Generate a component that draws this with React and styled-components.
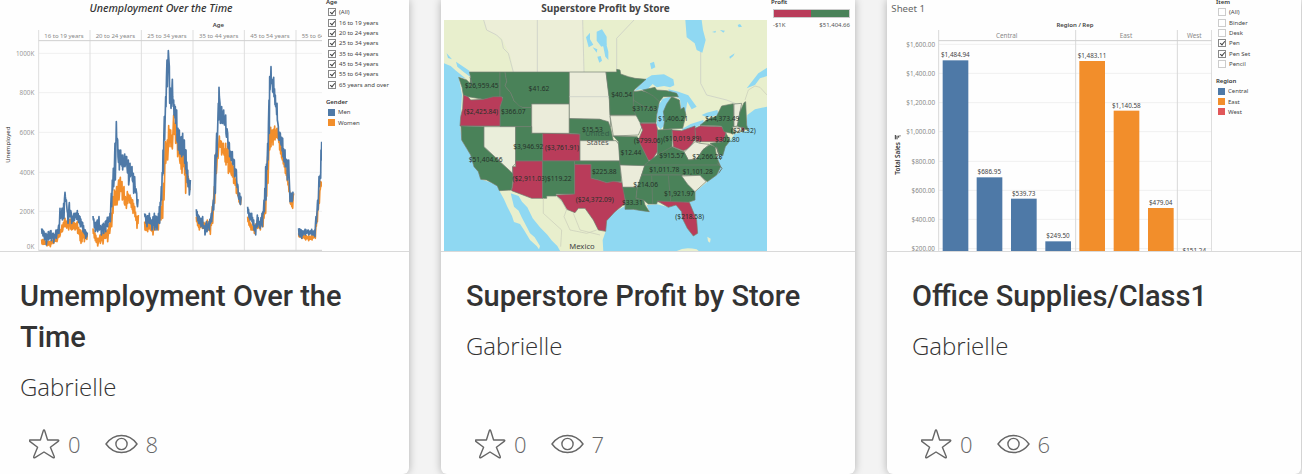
import React from "react";
import styled, { createGlobalStyle } from "styled-components";

const BLUE = "#4e79a7";
const ORANGE = "#f28e2b";
const RED = "#e15759";
const PROFIT = "#4a8259";
const LOSS = "#b93c5a";

const GlobalStyle = createGlobalStyle`
  * { box-sizing: border-box; }
  body {
    margin: 0;
    background: #f3f3f3;
    color: #333;
    font-family: "Open Sans", "Noto Sans", sans-serif;
    overflow-x: hidden;
  }
`;

const Gallery = styled.main`
  display: grid;
  grid-template-columns: repeat(3, minmax(0, 1fr));
  gap: 32px;
  margin: 0 1px 0 -5px;
`;

const Card = styled.article`
  display: flex;
  flex-direction: column;
  min-height: 474px;
  background: #fefefe;
  border-radius: 0 0 6px 6px;
  box-shadow: 0 0 8px rgba(0, 0, 0, 0.28);
`;

const Thumb = styled.div`
  display: flex;
  height: 252px;
  overflow: hidden;
  border-bottom: 1px solid #d9d9d9;
  font-family: "Noto Sans", sans-serif;
`;

const Drawing = styled.svg`
  flex: none;
  display: block;
  font-family: "Noto Sans", sans-serif;
`;

const MapColumn = styled.div`
  display: flex;
  flex-direction: column;
  flex: none;
  padding-left: 3px;
`;

const MapTitle = styled.h3`
  margin: 0;
  height: 20px;
  font-size: 10px;
  line-height: 16px;
  font-weight: 700;
  color: #444;
  text-align: center;
`;

const Side = styled.aside`
  flex: 1;
  min-width: 0;
  display: flex;
  flex-direction: column;
  gap: 7px;
  margin-top: -3px;
  padding-left: 4px;
  font-size: 7px;
  line-height: 10px;
  white-space: nowrap;
`;

const Group = styled.div`
  display: grid;
  grid-auto-rows: 1fr;
  min-height: ${(p) => Math.round((p.$rows * 31) / 3)}px;
`;

const GroupTitle = styled.div`
  font-size: 6px;
  font-weight: 600;
`;

const Option = styled.label`
  display: flex;
  align-items: center;
  gap: 3px;
  padding-left: 2px;
  color: #444;
  font-size: 6px;
`;

const Tick = styled.input`
  appearance: none;
  width: 8px;
  height: 8px;
  margin: 0;
  border: 1px solid #ccc;
  background: #fff;
  &:checked { border-color: #888; }
  &:checked::after {
    content: "";
    display: block;
    width: 2px;
    height: 4px;
    margin: 0 0 0 2px;
    border: solid #444;
    border-width: 0 1px 1px 0;
    transform: rotate(40deg);
  }
`;

const Swatch = styled.span`
  width: 7px;
  height: 7px;
  background: ${(p) => p.$color};
`;

const Ramp = styled.div`
  width: 77px;
  height: 9px;
  margin: 2px 0 2px 2px;
  border: 1px solid #ccc;
  background: linear-gradient(90deg, ${LOSS} 50%, ${PROFIT} 50%);
`;

const RampLabels = styled.div`
  display: flex;
  justify-content: space-between;
  width: 77px;
  margin-left: 2px;
  font-size: 6px;
  color: #555;
`;

const RampBox = styled.div`
  font-size: 6px;
`;

const Info = styled.div`
  flex: 1;
  display: flex;
  flex-direction: column;
  padding: 24px 25px 14px;
`;

const Title = styled.h2`
  margin: 0 0 14px;
  font-family: Roboto, "Open Sans", sans-serif;
  font-size: 29px;
  line-height: 41px;
  font-weight: 500;
`;

const TextLink = styled.a`
  color: inherit;
  text-decoration: none;
`;

const Author = styled(TextLink)`
  align-self: flex-start;
  font-size: 24px;
  line-height: 30px;
  font-weight: 300;
`;

const Stats = styled.div`
  display: flex;
  align-items: center;
  margin-top: auto;
  padding-left: 9px;
  gap: 24px;
  color: #666;
  font-size: 22px;
  line-height: 32px;
  font-weight: 300;
`;

const Stat = styled.span`
  display: flex;
  align-items: center;
  gap: 8px;
`;

const StarButton = styled.button`
  display: flex;
  padding: 0;
  border: 0;
  background: none;
  color: inherit;
`;

/* The thumbnails are drawn at three units to the pixel. */

const panels = [
  {
    label: "16 to 19 years", x: 192,
    men: [[125,685,700],[132,695,715],[138,700,735],[145,695,720],[153,692,722],[160,700,728],[168,690,715],[176,675,700],[180,625,655],[186,625,660],[191,610,655],[195,577,590],[199,600,615],[203,640,670],[208,608,650],[214,640,670],[222,640,662],[232,632,660],[240,650,680],[248,668,695],[256,690,715],[262,697,710]],
    women: [[125,718,732],[140,722,738],[150,725,740],[160,715,730],[170,705,725],[178,690,710],[186,675,695],[195,655,680],[205,655,690],[214,650,690],[224,670,690],[232,665,700],[242,690,730],[252,690,725],[262,700,720]],
  },
  {
    label: "20 to 24 years", x: 346,
    men: [[279,648,660],[285,670,695],[292,660,695],[297,650,690],[303,680,705],[310,670,700],[316,665,695],[322,652,680],[330,640,665],[334,580,620],[337,540,570],[340,505,560],[345,430,540],[349,365,420],[353,420,470],[357,450,510],[362,450,490],[367,465,510],[374,462,500],[380,470,500],[385,480,555],[390,490,530],[396,500,540],[400,520,580],[404,530,560],[410,580,610],[415,600,635]],
    women: [[279,685,700],[285,700,722],[292,715,738],[300,705,730],[308,700,732],[316,690,715],[322,690,725],[328,670,700],[334,640,680],[338,590,640],[343,570,615],[350,560,615],[356,540,600],[361,532,570],[366,545,600],[372,560,610],[378,595,625],[382,575,610],[390,585,610],[398,600,640],[404,620,650],[410,650,685],[415,645,675]],
  },
  {
    label: "25 to 34 years", x: 501,
    men: [[434,640,650],[440,650,680],[448,640,670],[455,660,690],[463,640,690],[470,650,690],[478,620,670],[484,560,600],[489,450,520],[493,350,420],[497,290,320],[501,180,260],[505,152,170],[508,200,310],[512,265,325],[517,238,290],[521,300,345],[526,320,370],[530,330,420],[534,385,450],[538,390,460],[544,410,470],[548,400,465],[553,420,490],[558,450,520],[563,510,560],[567,545,585],[571,540,570]],
    women: [[434,665,690],[442,665,695],[450,665,690],[458,680,705],[466,670,690],[474,660,690],[482,620,660],[487,600,655],[491,550,600],[496,425,490],[502,420,480],[506,377,440],[512,390,440],[516,410,447],[521,345,380],[526,370,430],[532,410,470],[538,440,480],[545,470,520],[550,460,500],[556,480,580],[562,510,550],[571,570,580]],
  },
  {
    label: "35 to 44 years", x: 656,
    men: [[589,628,648],[595,645,670],[602,655,680],[608,650,685],[614,680,705],[620,665,695],[627,665,690],[634,640,665],[640,600,630],[645,465,580],[650,400,470],[655,310,360],[657,262,290],[660,310,370],[665,320,370],[671,330,370],[677,345,400],[683,400,440],[688,430,470],[697,455,490],[703,480,530],[709,510,540],[714,560,590],[719,580,610],[724,590,630]],
    women: [[589,650,665],[597,665,690],[606,660,685],[614,670,695],[622,660,690],[630,670,703],[637,620,670],[643,560,610],[648,460,520],[653,450,475],[658,408,430],[664,425,465],[670,430,460],[677,430,495],[684,440,520],[692,470,520],[700,500,550],[708,540,580],[716,580,605],[724,595,620]],
  },
  {
    label: "45 to 54 years", x: 810,
    men: [[743,620,640],[749,640,660],[755,640,665],[761,660,690],[766,680,705],[772,645,680],[779,665,685],[786,640,680],[792,600,635],[797,500,600],[803,430,480],[807,300,400],[809,230,270],[813,200,250],[817,240,275],[821,232,290],[826,285,320],[831,310,360],[835,380,420],[841,400,430],[848,415,470],[855,450,500],[861,480,540],[866,480,520],[869,570,605],[875,580,605],[879,575,600]],
    women: [[743,650,665],[752,670,690],[762,680,700],[772,660,685],[780,665,690],[788,645,680],[796,610,640],[803,470,550],[808,400,450],[812,382,440],[818,390,435],[824,378,420],[831,385,410],[838,410,450],[846,450,480],[855,490,520],[863,520,555],[870,580,610],[877,600,625],[881,580,595]],
  },
  {
    label: "55 to 64 years", x: 964,
    men: [[896,685,705],[904,690,715],[915,688,705],[925,690,705],[935,688,705],[944,690,710],[948,650,670],[953,600,630],[957,530,560],[961,525,535],[963,450,480],[965,425,430]],
    women: [[896,700,710],[906,700,715],[916,705,720],[925,708,722],[935,705,720],[945,690,715],[951,640,665],[957,590,610],[962,545,560],[965,545,560]],
  },
];

/* Turns [x, high, low] bands into a jagged monthly line that touches both
   ends of every band. */
function jagged(bands) {
  const points = [];
  let n = 0;
  const add = (x, y) => points.push(`${x.toFixed(1)},${y.toFixed(1)}`);
  for (let i = 0; i < bands.length - 1; i++) {
    const [x0, h0, l0] = bands[i];
    const [x1, h1, l1] = bands[i + 1];
    add(x0, h0);
    add(x0 + 1, l0);
    for (let x = x0 + 2.5; x < x1 - 0.5; x += 1.5) {
      const t = (x - x0) / (x1 - x0);
      const high = h0 + (h1 - h0) * t;
      const low = l0 + (l1 - l0) * t;
      const r = Math.abs(Math.sin(n * 12.9898) * 43758.5453) % 1;
      add(x, high + (low - high) * (n % 2 ? 0.6 + r * 0.4 : r * 0.35));
      n++;
    }
  }
  const last = bands[bands.length - 1];
  add(last[0], last[1]);
  return points.join(" ");
}

function UnemploymentChart() {
  return (
    <Drawing width="327" height="251" viewBox="-15 0 981 753" role="img" aria-label="Unemployment by age">
      <text x="483" y="35" fontSize="32" fontStyle="italic" fontWeight="500" fill="#333" textAnchor="middle">Unemployment Over the Time</text>
      <text x="655" y="82" fontSize="18" fontWeight="600" fill="#444" textAnchor="middle">Age</text>
      <text transform="translate(30 434) rotate(-90)" fontSize="18" fill="#333" textAnchor="middle">Unemployed</text>
      {[["1000K", 160], ["800K", 278], ["600K", 397], ["400K", 517], ["200K", 634], ["0K", 739]].map(([t, y]) => (
        <g key={t}>
          {t !== "0K" && <path d={`M116 ${y}H966`} stroke="#f0f0f0" strokeWidth="3" />}
          <text x="103" y={y + 7} fontSize="19" fill="#999" textAnchor="end">{t}</text>
        </g>
      ))}
      {[116, 270, 424, 579, 733, 888].map((x) => <path key={x} d={`M${x} 90V752`} stroke="#dedede" strokeWidth="3" />)}
      <path d="M116 122H966M116 751H966" stroke="#cfcfcf" strokeWidth="3" />
      {panels.map((p) => (
        <g key={p.label} fill="none" strokeWidth="5" strokeLinejoin="round">
          <polyline points={jagged(p.women)} stroke={ORANGE} />
          <polyline points={jagged(p.men)} stroke={BLUE} />
          <text x={p.x} y="113" fontSize="18" fill="#888" stroke="none" textAnchor="middle">{p.label}</text>
        </g>
      ))}
    </Drawing>
  );
}

const westStates = [
  [PROFIT, "88,216 180,216 180,290 130,298 84,290 70,285 66,262 56,232 80,240 90,250 92,232"],
  [PROFIT, "180,216 195,216 200,245 195,258 212,278 222,302 248,322 275,322 275,380 180,380 180,320 188,292 180,290"],
  [PROFIT, "195,216 388,216 388,312 275,312 275,322 248,322 238,318 222,302 212,278 195,258 200,245"],
  [LOSS, "70,285 84,290 92,300 130,298 160,290 185,290 188,298 180,320 180,378 60,378 62,350 68,325"],
  [PROFIT, "63,378 132,380 132,440 220,522 218,545 215,570 178,572 172,558 155,548 140,540 122,538 115,515 102,500 92,465 80,445 65,420"],
  ["#eaeeda", "132,380 227,380 227,490 218,500 218,520 132,440"],
  ["#ebecda", "275,312 388,312 388,400 275,400"],
  ["#ebecda", "388,216 498,216 508,290 512,380 480,358 388,356"],
  [PROFIT, "227,380 275,380 275,400 308,400 308,483 227,483"],
  [LOSS, "308,400 420,402 420,483 308,483"],
  [LOSS, "227,483 308,483 308,595 275,595 215,572 220,545 218,500 227,500"],
  [PROFIT, "308,483 404,483 404,582 348,582 348,588 320,588 320,595 308,595"],
  [PROFIT, "388,356 480,358 505,365 512,385 520,422 420,422 420,402 388,400"],
  ["#ebecda", "420,422 528,422 538,435 540,483 420,483"],
  [PROFIT, "404,483 540,483 544,545 520,545 500,548 475,540 453,535 453,493 404,493"],
  [LOSS, "404,493 453,493 453,535 475,540 500,548 520,544 548,548 553,570 556,610 525,635 500,662 497,694 475,690 460,660 435,625 415,625 405,638 380,628 365,600 348,585 404,582"],
];

const eastStates = [
  [PROFIT, "18,216 50,216 50,208 60,210 62,222 85,230 105,235 138,238 102,270 100,300 115,345 30,345 28,300"],
  ["#ebecda", "30,347 115,347 128,375 115,405 40,408"],
  [PROFIT, "40,408 112,410 130,450 145,480 150,490 130,500 60,495 55,425"],
  ["#ebecda", "60,495 135,497 125,525 112,562 68,562"],
  [PROFIT, "68,562 112,562 108,595 130,598 135,615 148,635 125,632 100,628 75,628 76,600"],
  [PROFIT, "100,275 125,272 165,284 178,305 170,345 168,368 120,368 100,330"],
  [LOSS, "120,370 168,370 173,390 172,455 155,482 145,480 130,450 115,420 128,390"],
  [PROFIT, "128,270 165,262 170,270 200,272 230,280 235,290 190,290 178,305 160,288"],
  [PROFIT, "190,388 194,360 190,335 200,312 215,290 238,300 242,328 252,322 258,345 248,385"],
  [PROFIT, "173,390 216,388 216,440 190,462 172,465"],
  [LOSS, "216,390 245,392 285,378 287,415 268,445 250,452 220,440"],
  [LOSS, "285,385 300,378 365,380 378,398 370,425 288,425"],
  [PROFIT, "300,376 320,360 350,348 365,318 400,311 402,380 404,402 372,395 365,378"],
  ["#ebecda", "402,312 425,310 420,335 412,378 402,380"],
  [PROFIT, "412,378 420,335 432,308 437,305 440,375 444,390 425,385"],
  ["#ebecda", "398,380 425,382 428,392 400,396"],
  [LOSS, "424,381 434,384 432,394 426,392"],
  ["#ebecda", "252,457 285,425 300,430 328,433 308,450 290,478 265,480"],
  [PROFIT, "135,493 172,465 216,440 252,455 265,480 290,478 310,448 330,434 345,440 350,470 362,500 350,525 322,545 300,528 245,525 125,525"],
  [PROFIT, "125,525 245,525 285,575 285,600 265,607 172,605 170,612 145,612 130,600 108,595 112,562"],
  ["#ebecda", "245,528 300,526 318,545 285,575 262,552"],
  [LOSS, "172,603 268,607 290,660 293,700 280,708 262,685 247,655 245,635 228,615 205,622"],
  [PROFIT, "330,430 370,425 378,400 390,422 376,440 368,468 355,460 350,445"],
];

const mapLabels = [
  ["$26,959.45", 125, 256], ["$41.62", 297, 266], ["($2,425.84)", 123, 336], ["$366.07", 220, 334],
  ["$51,404.66", 137, 479], ["$3,946.92", 265, 439], ["($3,761.91)", 366, 443], ["($2,911.03)", 269, 535],
  ["$119.22", 358, 535], ["$15.53", 457, 390], ["$225.88", 493, 515], ["($24,372.09)", 464, 598],
  ["$40.54", 545, 285], ["$317.63", 614, 325], ["$1,406.21", 699, 356], ["($799.06)", 625, 423],
  ["($10,019.89)", 727, 416], ["$44,373.49", 847, 357], ["$302.80", 862, 420], ["($24.32)", 910, 391],
  ["$12.44", 573, 459], ["$915.57", 695, 467], ["$2,266.28", 802, 469], ["$1,011.78", 673, 510],
  ["$1,101.28", 773, 515], ["$214.06", 617, 553], ["$1,921.97", 717, 580], ["$33.31", 577, 607], ["($218.58)", 749, 650],
];

const WATER = "#8fd8f2";

function ProfitMap() {
  return (
    <Drawing width="323" height="231" viewBox="12 60 969 693" role="img" aria-label="Profit by state">
      <path d="M12 57H981V756H12Z" fill="#e8efcd" />
      <path d="M131 60H292V216H220L212 170L185 115L140 90ZM292 60H428L432 216H292Z" fill="#ecedda" opacity=".8" />
      <g fill="none" stroke="#c6c8c4" strokeWidth="2">
        <path d="M131 60L140 90L170 105L185 120L190 145L205 160L220 216M292 60V216M428 60L432 216M582 60L530 115V208M782 150V250L800 285L860 300L890 312" />
      </g>
      <g fill={WATER}>
        <path d="M12 190L32 198L48 212L78 236L56 230L66 285L60 375L65 420L92 465L102 500L115 515L122 538L155 548L172 558L178 572L192 598L202 620L216 648L222 666L240 672L252 690L270 720L290 738L297 748L300 738L284 712L270 700L262 684L245 652L236 632L222 620L212 580L236 588L246 605L262 622L278 655L300 682L322 704L336 722L352 738L362 756H12Z" />
        <path d="M497 694L500 662L525 635L556 617L575 628L600 630L628 635L620 615L652 613L685 622L708 615L727 636L728 655L742 685L760 708L773 700L770 660L748 607L765 600L766 575L802 545L830 525L842 500L832 470L845 455L856 440L870 422L884 402L922 392L920 375L922 345L945 328L981 320V756H490L488 720Z" />
        <path d="M48 185L88 212L90 230L70 215L52 200ZM20 160L36 178L24 174ZM470 95L486 88L500 110L500 134L484 140L470 122ZM438 112L450 98L450 118L460 134L446 142ZM458 142L472 148L470 158ZM472 170L482 168L486 182L478 188Z" />
        <path d="M736 60H785L789 90L797 120L787 158L770 150L764 130L740 112ZM630 190L642 185L646 202L634 208ZM868 170L884 160L880 168L870 176ZM981 203L955 220L920 265L945 255L960 235L981 228ZM816 96L828 92L826 98ZM840 90L855 92L850 98ZM893 75L900 72L906 80L896 82ZM480 90L492 105L505 155V180L496 170L490 140L480 118Z" />
        <path d="M583 273L612 240L635 226L672 223L700 238L703 256L690 262L672 258L650 262L638 252L618 272L600 268Z" />
        <path d="M650 375L652 322L668 296L692 290L680 325L674 375L662 388Z" />
        <path d="M685 268L715 275L745 286L770 320L755 328L742 305L735 345L724 330L720 298L705 288L690 286Z" />
        <path d="M725 388L752 372L790 360L792 370L760 385L735 394ZM785 345L800 338L832 330L836 345L800 352Z" />
      </g>
      <g fill="#e8efcd">
        <path d="M706 756Q730 738 770 748L780 756ZM802 710L812 716L810 728L804 724Z" />
      </g>
      <g stroke="#6f7c70" strokeWidth="2" strokeLinejoin="round">
        {westStates.map(([fill, points]) => <polygon key={points} fill={fill} points={points} />)}
        <g transform="translate(480 0)">
          {eastStates.map(([fill, points]) => <polygon key={points} fill={fill} points={points} />)}
          <path d="M155 527L158 612M205 527L212 605M135 495H360M100 300L128 318L170 330" fill="none" />
        </g>
        <path d="M388 290H507" stroke="#c6c8c4" />
      </g>
      <path d="M348 588L365 605L380 628L372 650L390 690L440 700L470 690M310 595V640L365 690L362 740M400 640L420 690L480 705M915 300L925 270L945 258L960 262L981 285" fill="none" stroke="#c9cbb9" strokeWidth="2" />
      <path d="M830 440L836 462L842 480M832 488L846 505L836 520M90 232L96 250L88 262" fill="none" stroke="#6f7c70" strokeWidth="3" />
      <g textAnchor="middle" fontSize="23">
        <text x="472" y="407" fill="#36604a">United</text>
        <text x="473" y="435" fill="#555">States</text>
        <text x="426" y="748" fill="#444">Mexico</text>
      </g>
      <g textAnchor="middle" fontSize="20" fill="#26322a">
        {mapLabels.map(([t, x, y]) => <text key={t} x={x} y={y + 7}>{t}</text>)}
      </g>
    </Drawing>
  );
}

const bars = [
  [173, 181, BLUE, "$1,484.94"], [275, 532, BLUE, "$686.95"], [378, 596, BLUE, "$539.73"], [481, 724, BLUE, "$249.50"],
  [583, 183, ORANGE, "$1,483.11"], [686, 332, ORANGE, "$1,140.58"], [789, 624, ORANGE, "$479.04"],
];
const ticks = [
  ["$1,600.00", 133], ["$1,400.00", 220], ["$1,200.00", 308], ["$1,000.00", 395],
  ["$800.00", 484], ["$600.00", 571], ["$400.00", 658], ["$200.00", 746],
];

function SuppliesChart() {
  return (
    <Drawing width="325" height="251" viewBox="6 0 975 753" role="img" aria-label="Total sales by region and rep">
      <text x="19" y="35" fontSize="29" fill="#666">Sheet 1</text>
      <text x="570" y="81" fontSize="18" fontWeight="600" fill="#444" textAnchor="middle">Region / Rep</text>
      <text transform="translate(45 524) rotate(-90)" fontSize="19" fontWeight="600" fill="#333">Total Sales</text>
      <path d="M31 418V405M36 418V407M41 413V407M45 409V406" stroke="#333" strokeWidth="3" />
      {ticks.map(([t, y]) => (
        <g key={t}>
          <path d={`M161 ${y}H980`} stroke="#f0f0f0" strokeWidth="3" />
          <text x="150" y={y + 7} fontSize="19" fill="#888" textAnchor="end">{t}</text>
        </g>
      ))}
      {[161, 572, 877, 980].map((x) => <path key={x} d={`M${x} 90V753`} stroke="#d8d8d8" strokeWidth="3" />)}
      <path d="M161 122H980" stroke="#cfcfcf" strokeWidth="3" />
      {[["Central", 365], ["East", 723], ["West", 928]].map(([t, x]) => (
        <text key={t} x={x} y="113" fontSize="19" fill="#888" textAnchor="middle">{t}</text>
      ))}
      {bars.map(([x, y, color, label]) => (
        <g key={label}>
          <rect x={x} y={y} width="77" height={753 - y} fill={color} />
          <text x={x + 38} y={y - 9} fontSize="19" fill="#444" textAnchor="middle">{label}</text>
        </g>
      ))}
      <text x="928" y="758" fontSize="19" fill="#444" textAnchor="middle">$151.24</text>
    </Drawing>
  );
}

function Filter({ title, options, checked }) {
  return (
    <Group $rows={options.length + 1} role="group" aria-label={title}>
      <GroupTitle>{title}</GroupTitle>
      {options.map((o) => (
        <Option key={o}>
          <Tick type="checkbox" defaultChecked={checked.includes(o)} />
          {o}
        </Option>
      ))}
    </Group>
  );
}

function Legend({ title, items }) {
  return (
    <Group $rows={items.length + 1}>
      <GroupTitle>{title}</GroupTitle>
      {items.map(([name, color]) => (
        <Option as="div" key={name}><Swatch $color={color} />{name}</Option>
      ))}
    </Group>
  );
}

function StarIcon() {
  return (
    <svg width="31" height="32" viewBox="1 0 31 32" fill="none" stroke="currentColor" strokeWidth="1.4" strokeLinejoin="round" aria-hidden="true">
      <path d="M16 2C16.4 2 16.6 2.4 16.8 3L19.6 12H29.8C31 12 31 12.8 30.2 13.4L22.4 19.2L26.2 28.6C26.6 29.8 26 30.2 25 29.6L16 24L7 29.6C6 30.2 5.4 29.8 5.8 28.6L9.6 19.2L1.8 13.4C1 12.8 1 12 2.2 12H12.4L15.2 3C15.4 2.4 15.6 2 16 2Z" />
    </svg>
  );
}

function EyeIcon() {
  return (
    <svg width="33" height="32" viewBox="0 0 33 32" fill="none" stroke="currentColor" strokeWidth="1.4" aria-hidden="true">
      <path d="M1 16C5 10.5 10 7.5 16.5 7.5S28 10.5 32 16C28 21.5 23 24.5 16.5 24.5S5 21.5 1 16Z" />
      <circle cx="16.5" cy="16" r="5.6" />
    </svg>
  );
}

function VizCard({ title, views, children }) {
  return (
    <Card>
      <Thumb>{children}</Thumb>
      <Info>
        <Title><TextLink href="#viz">{title}</TextLink></Title>
        <Author href="#author">Gabrielle</Author>
        <Stats>
          <Stat><StarButton type="button" aria-label="Favorite"><StarIcon /></StarButton>0</Stat>
          <Stat><EyeIcon />{views}</Stat>
        </Stats>
      </Info>
    </Card>
  );
}

const ages = ["(All)", "16 to 19 years", "20 to 24 years", "25 to 34 years", "35 to 44 years", "45 to 54 years", "55 to 64 years", "65 years and over"];

export default function App() {
  return (
    <>
      <GlobalStyle />
      <Gallery>
        <VizCard title="Umemployment Over the Time" views={8}>
          <UnemploymentChart />
          <Side>
            <Filter title="Age" options={ages} checked={ages} />
            <Legend title="Gender" items={[["Men", BLUE], ["Women", ORANGE]]} />
          </Side>
        </VizCard>
        <VizCard title="Superstore Profit by Store" views={7}>
          <MapColumn>
            <MapTitle>Superstore Profit by Store</MapTitle>
            <ProfitMap />
          </MapColumn>
          <Side>
            <RampBox>
              <GroupTitle>Profit</GroupTitle>
              <Ramp />
              <RampLabels><span>-$1K</span><span>$51,404.66</span></RampLabels>
            </RampBox>
          </Side>
        </VizCard>
        <VizCard title="Office Supplies/Class1" views={6}>
          <SuppliesChart />
          <Side>
            <Filter title="Item" options={["(All)", "Binder", "Desk", "Pen", "Pen Set", "Pencil"]} checked={["Pen", "Pen Set"]} />
            <Legend title="Region" items={[["Central", BLUE], ["East", ORANGE], ["West", RED]]} />
          </Side>
        </VizCard>
      </Gallery>
    </>
  );
}
